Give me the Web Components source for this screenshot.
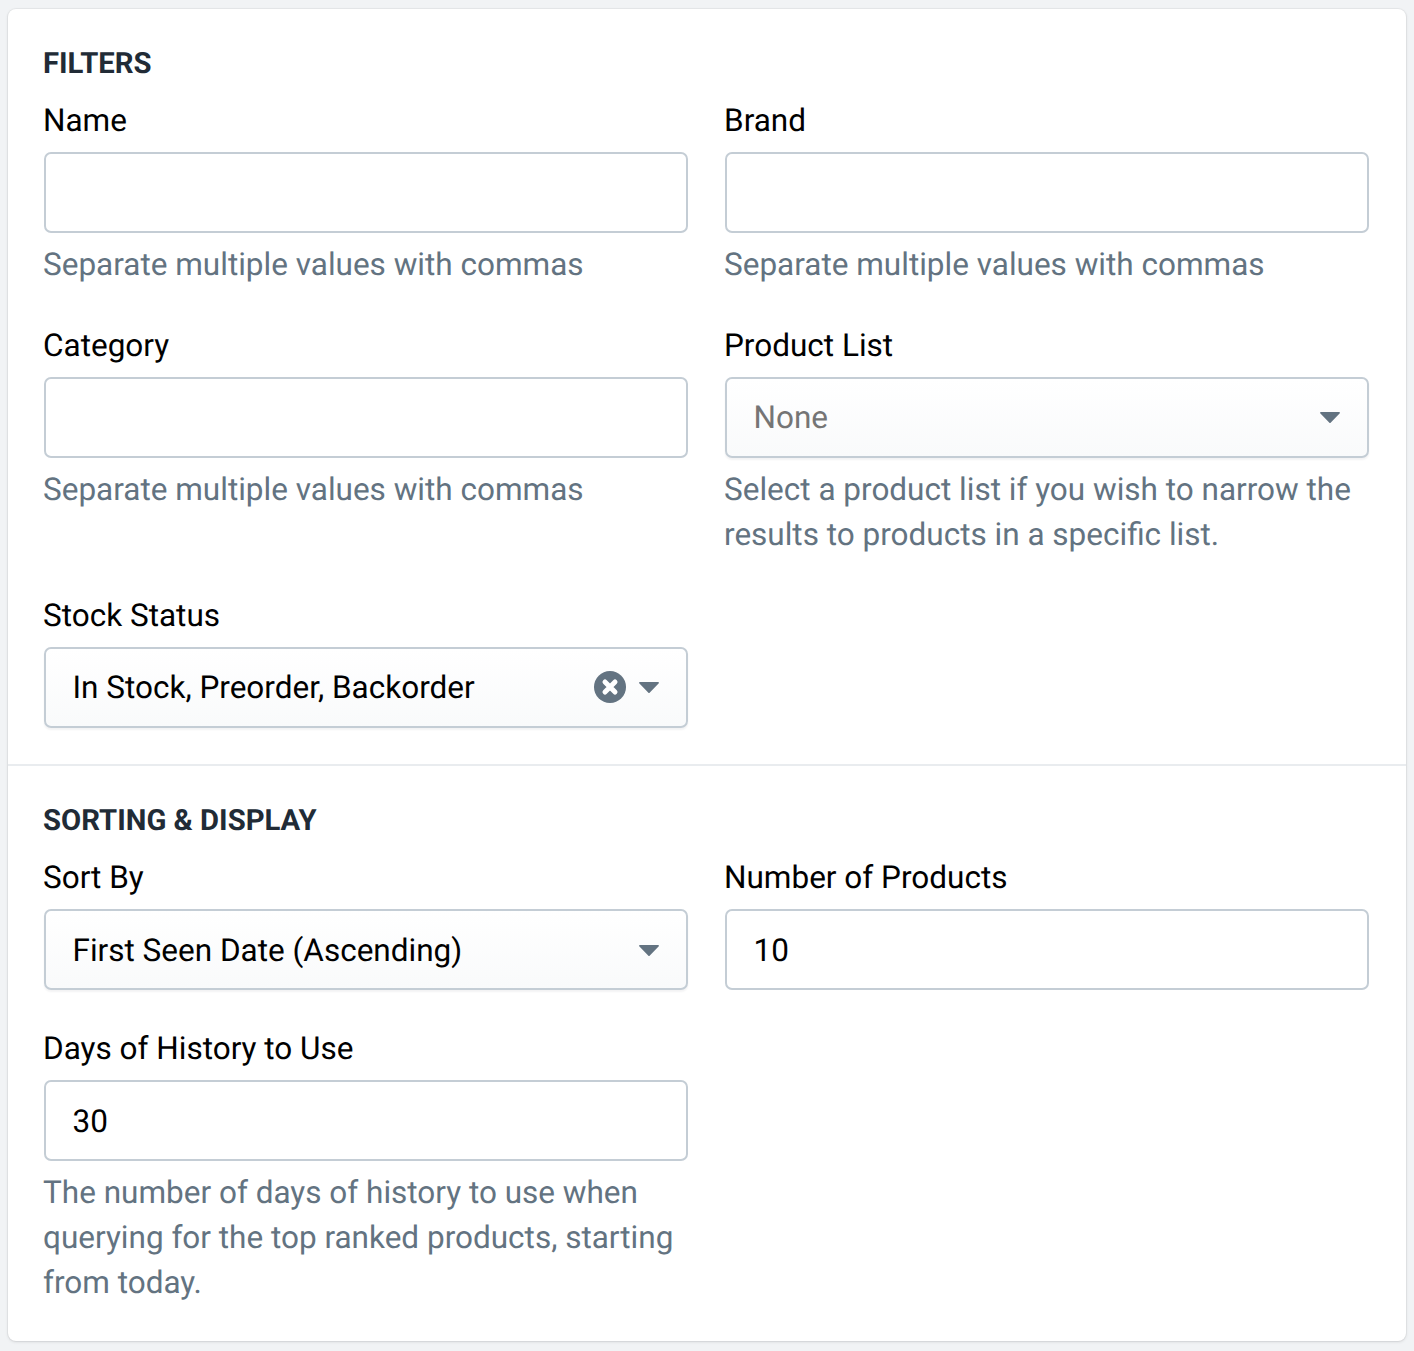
<!DOCTYPE html>
<html><head><meta charset="utf-8"><title>Filters</title>
<style>
html,body{margin:0;padding:0;background:#f1f3f5}
body{padding:9px 8px 10px 7.5px;font-family:Roboto,"Liberation Sans",sans-serif;text-rendering:geometricPrecision}
</style></head><body>
<x-card>
  <x-section heading="FILTERS">
    <x-field label="Name" help="Separate multiple values with commas"><x-input></x-input></x-field>
    <x-field label="Brand" help="Separate multiple values with commas"><x-input></x-input></x-field>
    <x-field label="Category" help="Separate multiple values with commas"><x-input></x-input></x-field>
    <x-field label="Product List" help="Select a product list if you wish to narrow the results to products in a specific list."><x-select placeholder>None</x-select></x-field>
    <x-field label="Stock Status"><x-select clearable>In Stock, Preorder, Backorder</x-select></x-field>
  </x-section>
  <x-section heading="SORTING &amp; DISPLAY" style="--tp:2px">
    <x-field label="Sort By"><x-select>First Seen Date (Ascending)</x-select></x-field>
    <x-field label="Number of Products"><x-input>10</x-input></x-field>
    <x-field label="Days of History to Use" help="The number of days of history to use when querying for the top ranked products, starting from today."><x-input>30</x-input></x-field>
  </x-section>
</x-card>
<script>
function def(name, css, html){
  customElements.define(name, class extends HTMLElement{
    connectedCallback(){
      if(this.shadowRoot) return;
      const r=this.attachShadow({mode:'open'});
      r.innerHTML='<style>'+css+'</style>'+(typeof html==='function'?html(this):html);
    }
  });
}
const esc=s=>String(s).replace(/&/g,'&amp;').replace(/</g,'&lt;');
def('x-card',`:host{display:block;background:#fff;border-radius:8px;box-shadow:0 0 0 1px rgba(63,63,68,.05),0 1px 3px 0 rgba(63,63,68,.15);overflow:hidden}`,`<slot></slot>`);
def('x-section',`:host{display:block;padding:36px;border-top:2px solid #e9ecef}
:host(:first-child){border-top:0}
h2{margin:0 0 16px -.5px;padding-top:2px;font:700 29.25px/35px Roboto,sans-serif;color:#212b36}
.grid{display:grid;grid-template-columns:644.5px 644.5px;column-gap:36.5px;row-gap:36px;align-items:start}`,
 h=>`<h2>${esc(h.getAttribute('heading'))}</h2><div class="grid"><slot></slot></div>`);
def('x-field',`:host{display:block;color:#000}
label{display:block;font:400 31.5px/45px Roboto,sans-serif;color:#000;margin:0 0 9px -.5px}
p{margin:9px 0 0 -.5px;font:400 31.5px/45px Roboto,sans-serif;color:#637381}`,
 h=>`<label>${esc(h.getAttribute('label'))}</label><slot></slot>${h.hasAttribute('help')?`<p>${esc(h.getAttribute('help'))}</p>`:''}`);
def('x-input',`:host{display:flex;align-items:center;box-sizing:border-box;height:81px;padding:var(--tp,0px) 27.5px 0 27px;background:#fff;border:2px solid #c4cdd5;border-radius:7px;font:400 31.5px/45px Roboto,sans-serif;color:#000}`,`<slot></slot>`);
def('x-select',`:host{display:flex;align-items:center;box-sizing:border-box;height:81px;padding:var(--tp,0px) 27.5px 0 27px;background:linear-gradient(#fff,#f9fafb);border:2px solid #c4cdd5;border-radius:7px;box-shadow:0 2px 2px rgba(22,29,37,.05);font:400 31.5px/45px Roboto,sans-serif;color:#000}
:host([placeholder]){color:#757575}
.t{flex:1;white-space:nowrap}
svg{display:block;flex:none}
.x{margin:0 12.5px 1.5px 0}`,
 h=>`<span class="t"><slot></slot></span>${h.hasAttribute('clearable')?`<svg class="x" width="32" height="32" viewBox="0 0 32 32"><circle cx="16" cy="16" r="16" fill="#637381"/><path d="M11 11l10 10M21 11l-10 10" stroke="#fff" stroke-width="5" stroke-linecap="round"/></svg>`:''}<svg width="20" height="11" viewBox="0 0 20 11"><path d="M.8 0h18.4a.8.8 0 0 1 .6 1.3L10.6 10.7a.8.8 0 0 1-1.2 0L.2 1.3A.8.8 0 0 1 .8 0z" fill="#637381"/></svg>`);
</script>
</body></html>
